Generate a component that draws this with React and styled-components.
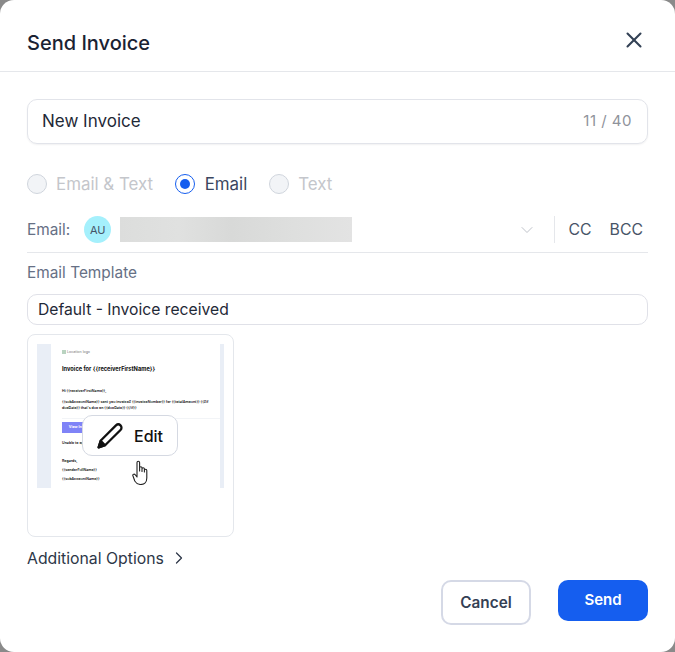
import React from 'react';
import styled, { createGlobalStyle } from 'styled-components';
import { X, ChevronDown, ChevronRight } from 'lucide-react';

const GlobalStyle = createGlobalStyle`
    html, body {
        margin: 0;
        padding: 0;
        background: #8a8a8a;
    }
    body {
        width: 675px;
        height: 652px;
        overflow: hidden;
        font-family: 'Inter', 'Liberation Sans', sans-serif;
    }
    * {
        box-sizing: border-box;
    }
`

const Modal = styled.div`
    width: 675px;
    height: 652px;
    background: #fff;
    border-radius: 14px;
    display: flex;
    flex-direction: column;
`

const Header = styled.div`
    height: 72px;
    flex-shrink: 0;
    padding: 14px 28px 0 27px;
    display: flex;
    align-items: center;
    justify-content: space-between;
    border-bottom: 1px solid #e5e7eb;
    h2 {
        margin: 0;
        font-size: 20px;
        line-height: 28px;
        font-weight: 500;
        color: #1a2233;
    }
    svg {
        color: #334155;
        margin-top: -5px;
    }
`

const Body = styled.div`
    padding: 27px 27px 0;
    display: flex;
    flex-direction: column;
`

const NameField = styled.div`
    height: 45px;
    border: 1px solid #e2e4ea;
    border-radius: 10px;
    box-shadow: 0 1px 2px rgba(16, 24, 40, 0.06);
    padding: 0 15px 2px 14px;
    display: flex;
    align-items: center;
    justify-content: space-between;
    font-size: 17px;
    color: #1f2937;
    span {
        font-size: 15px;
        letter-spacing: 0.5px;
        color: #8f939b;
    }
`

const RadioRow = styled.div`
    margin-top: 28px;
    height: 24px;
    display: flex;
    align-items: center;
    gap: 22px;
`

const RadioItem = styled.label`
    display: flex;
    align-items: center;
    gap: ${p => (p.$active ? '9.5px' : '9px')};
    font-size: 16.9px;
    color: ${p => (p.$active ? '#3b4660' : '#c4c6cb')};
`

const RadioDot = styled.span`
    width: 20px;
    height: 20px;
    border-radius: 50%;
    border: 1px solid ${p => (p.$active ? '#155eef' : '#d0d5dd')};
    background: ${p => (p.$active ? '#fff' : '#f2f4f7')};
    display: flex;
    align-items: center;
    justify-content: center;
    &::after {
        content: '';
        display: ${p => (p.$active ? 'block' : 'none')};
        width: 10px;
        height: 10px;
        border-radius: 50%;
        background: #155eef;
    }
`

const EmailRow = styled.div`
    margin-top: 20px;
    height: 37px;
    padding-bottom: 9px;
    display: flex;
    align-items: center;
    border-bottom: 1px solid #e5e7eb;
`

const FieldLabel = styled.span`
    font-size: 15.4px;
    line-height: 20px;
    color: #667085;
`

const Avatar = styled.span`
    width: 27px;
    height: 27px;
    margin-left: 14px;
    border-radius: 50%;
    background: #a5f0fc;
    color: #475467;
    font-size: 11px;
    display: flex;
    align-items: center;
    justify-content: center;
`

const BlurredAddress = styled.div`
    width: 232px;
    height: 25px;
    margin-left: 9px;
    background: linear-gradient(90deg, #dcdddc 0%, #e0e1e0 25%, #d8d9d8 48%, #dedfde 75%, #e3e3e3 100%);
`

const Chevron = styled(ChevronDown)`
    margin-left: auto;
    color: #bfc3ca;
`

const Divider = styled.span`
    width: 1px;
    height: 27px;
    margin: 0 13px 0 17px;
    background: #e5e7eb;
`

const CopyLink = styled.span`
    font-size: 15.8px;
    color: #475467;
    margin-right: ${p => (p.$last ? '5px' : '18px')};
`

const TemplateLabel = styled(FieldLabel)`
    margin-top: 10px;
`

const TemplateSelect = styled.div`
    margin-top: 11px;
    height: 31px;
    border: 1px solid #e0e1e8;
    border-radius: 10px;
    padding: 0 10px 1px;
    display: flex;
    align-items: center;
    font-size: 15.7px;
    color: #1f2937;
`

const PreviewCard = styled.div`
    position: relative;
    margin-top: 9px;
    width: 207px;
    height: 203px;
    padding: 9px;
    border: 1px solid #e4e7ec;
    border-radius: 8px;
`

const MailFrame = styled.div`
    height: 144px;
    background: #fff;
    border-left: 14px solid #e9eef6;
    border-right: 4px solid #e9eef6;
    padding: 5px 0 0 11px;
    font-size: 3.6px;
    font-weight: 600;
    line-height: 6px;
    color: #111;
    overflow: hidden;
`

const MailLogo = styled.div`
    color: #777;
    font-weight: 400;
    display: flex;
    align-items: center;
    gap: 1px;
    &::before {
        content: '';
        width: 4px;
        height: 4px;
        background: #b9d3c0;
    }
`

const MailTitle = styled.div`
    margin-top: 11px;
    font-size: 5.7px;
    font-weight: 700;
`

const MailLine = styled.div`
    margin-top: ${p => p.$gap ?? 4}px;
    white-space: nowrap;
`

const MailRule = styled.div`
    margin-top: 7px;
    height: 1px;
    background: #f2f4f7;
`

const MailButton = styled.div`
    margin-top: 3px;
    width: 36px;
    height: 11px;
    background: #7f83f7;
    color: #fff;
    font-weight: 700;
    text-align: center;
    line-height: 11px;
`

const EditButton = styled.div`
    position: absolute;
    left: 54px;
    top: 80px;
    width: 96px;
    height: 41px;
    background: #fff;
    border: 1px solid #d5d9e2;
    border-radius: 10px;
    display: flex;
    align-items: center;
    justify-content: center;
    gap: 11px;
    font-size: 16px;
    font-weight: 500;
    color: #111;
`

const HandCursor = styled.svg`
    position: absolute;
    left: 104px;
    top: 125px;
`

const MoreOptions = styled.div`
    margin-top: 11px;
    height: 20px;
    display: flex;
    align-items: center;
    gap: 5px;
    font-size: 15.8px;
    color: #2d3748;
    svg {
        color: #2d3748;
    }
`

const Footer = styled.div`
    margin-top: 12px;
    display: flex;
    align-items: flex-start;
    justify-content: flex-end;
    gap: 27px;
`

const CancelButton = styled.button`
    width: 90px;
    height: 45px;
    background: #fff;
    border: 2px solid #d5d9e6;
    border-radius: 10px;
    font: 600 15.3px 'Inter', sans-serif;
    color: #344054;
`

const SendButton = styled.button`
    width: 90px;
    height: 41px;
    padding-bottom: 3px;
    background: #155eef;
    border: none;
    border-radius: 10px;
    font: 600 15px 'Inter', sans-serif;
    color: #fff;
`

function PencilIcon() {
    return (
        <svg width="26" height="26" viewBox="0 0 24 24" fill="none" stroke="#111" strokeWidth="2.1" strokeLinejoin="round">
            <path d="M17.5 2.200c1.300-1.200 3-1.200 4.200 0 1.200 1.200 1.200 3 0 4.200L7.500 20.500l-6 2 2-6.300z" />
            <path d="M1.500 22.500l1.900-6 4 4z" fill="#111" />
        </svg>
    )
}

function App() {
    return (
        <>
            <GlobalStyle />
            <Modal>
                <Header>
                    <h2>Send Invoice</h2>
                    <X size={26} strokeWidth={1.9} />
                </Header>
                <Body>
                    <NameField>
                        New Invoice
                        <span>11 / 40</span>
                    </NameField>
                    <RadioRow>
                        <RadioItem><RadioDot />Email &amp; Text</RadioItem>
                        <RadioItem $active><RadioDot $active />Email</RadioItem>
                        <RadioItem><RadioDot />Text</RadioItem>
                    </RadioRow>
                    <EmailRow>
                        <FieldLabel>Email:</FieldLabel>
                        <Avatar>AU</Avatar>
                        <BlurredAddress />
                        <Chevron size={20} strokeWidth={1.2} />
                        <Divider />
                        <CopyLink>CC</CopyLink>
                        <CopyLink $last>BCC</CopyLink>
                    </EmailRow>
                    <TemplateLabel>Email Template</TemplateLabel>
                    <TemplateSelect>Default - Invoice received</TemplateSelect>
                    <PreviewCard>
                        <MailFrame>
                            <MailLogo>Location logo</MailLogo>
                            <MailTitle>Invoice for {'{{receiverFirstName}}'}</MailTitle>
                            <MailLine $gap={16}>Hi {'{{receiverFirstName}}'},</MailLine>
                            <MailLine $gap={5}>{'{{subAccountName}}'} sent you invoice# {'{{invoiceNumber}}'} for {'{{totalAmount}}'} {'{{#if'}</MailLine>
                            <MailLine $gap={0}>dueDate{'}}'} that's due on {'{{dueDate}}'} {'{{/if}}'}</MailLine>
                            <MailRule />
                            <MailButton>View Invoice</MailButton>
                            <MailLine $gap={7}>Unable to open</MailLine>
                            <MailLine $gap={12}>Regards,</MailLine>
                            <MailLine $gap={3}>{'{{senderFullName}}'}</MailLine>
                            <MailLine $gap={3}>{'{{subAccountName}}'}</MailLine>
                        </MailFrame>
                        <EditButton><PencilIcon />Edit</EditButton>
                        <HandCursor width="19" height="25" viewBox="0 0 19 25" fill="#fff" stroke="#222" strokeWidth="1.1" strokeLinejoin="round" strokeLinecap="round">
                            <path d="M5 14V2.500a1.300 1.300 0 0 1 2.600 0V11V8a1.200 1.200 0 0 1 2.400 0v3.500V9a1.200 1.200 0 0 1 2.400 0v3V10.500a1.200 1.200 0 0 1 2.400 0V18c0 4-2.500 6.500-6 6.500-3 0-4.500-1-6-3.500L1 16c-.8-1.300 1-2.500 2-1.500l2 2.500z" />
                        </HandCursor>
                    </PreviewCard>
                    <MoreOptions>
                        Additional Options
                        <ChevronRight size={20} strokeWidth={1.5} />
                    </MoreOptions>
                    <Footer>
                        <CancelButton>Cancel</CancelButton>
                        <SendButton>Send</SendButton>
                    </Footer>
                </Body>
            </Modal>
        </>
    )
}

export default App
